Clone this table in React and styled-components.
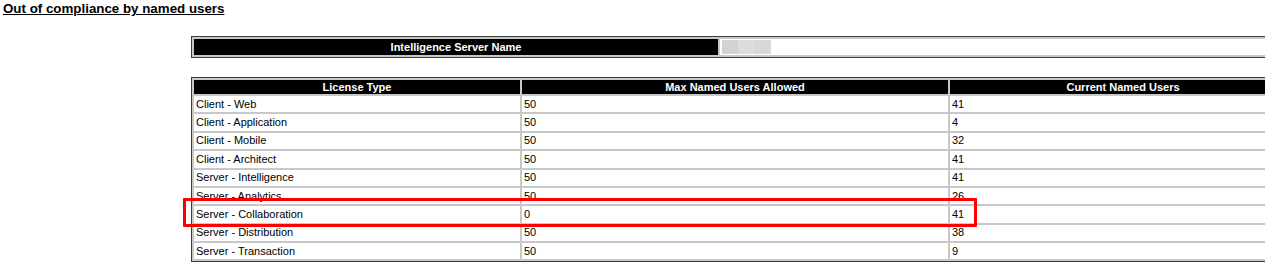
import styled, { createGlobalStyle } from "styled-components";

const GlobalStyle = createGlobalStyle`
  html, body {
    margin: 0;
    padding: 0;
    background: #ffffff;
    overflow: hidden;
  }
  body {
    font-family: "Liberation Sans", Arial, sans-serif;
    color: #000000;
  }
`;

const Page = styled.div`
  padding: 1px 0 0 3px;
`;

const Title = styled.div`
  font-size: 13.33px;
  line-height: 16px;
  font-weight: bold;
  text-decoration: underline;
`;

const Frame = styled.div`
  position: relative;
  margin-left: 188px;
  margin-top: ${(props) => props.$top}px;
  width: 1106px;
  border: 1px solid #3c3c3c;
`;

const Table = styled.table`
  width: 100%;
  table-layout: fixed;
  border-collapse: separate;
  border-spacing: 0;
  border-top: 2px solid #c8c8c8;
  border-left: 2px solid #c8c8c8;
`;

const HeadCell = styled.th`
  box-sizing: border-box;
  background: #000000;
  color: #ffffff;
  font-size: 11px;
  font-weight: bold;
  text-align: center;
  padding: 0 2px;
  height: ${(props) => props.$h || 14}px;
  line-height: 12px;
  border-right: 2px solid #c8c8c8;
  border-bottom: 2px solid #c8c8c8;
`;

const Cell = styled.td`
  box-sizing: content-box;
  font-size: 11px;
  padding: 0 2px;
  height: 16.375px;
  line-height: 13px;
  vertical-align: middle;
  border-right: 2px solid #c8c8c8;
  border-bottom: 2px solid #c8c8c8;
  white-space: nowrap;
`;

const ValueCell = styled.td`
  padding: 0 2px;
  vertical-align: top;
  border-right: 2px solid #c8c8c8;
  border-bottom: 2px solid #c8c8c8;
`;

// redacted server name
const Redacted = styled.span`
  display: block;
  width: 49px;
  height: 14px;
  margin-top: 1px;
  background: linear-gradient(
    to right,
    #d3d3d3 0 16px,
    #dddddd 16px 32px,
    #d8d8d8 32px 49px
  );
`;

const Highlight = styled.div`
  position: absolute;
  left: -9px;
  top: 120px;
  width: 788px;
  height: 23px;
  border: 3px solid #ff0000;
  border-radius: 1px;
  pointer-events: none;
`;

const rows = [
  ["Client - Web", 50, 41],
  ["Client - Application", 50, 4],
  ["Client - Mobile", 50, 32],
  ["Client - Architect", 50, 41],
  ["Server - Intelligence", 50, 41],
  ["Server - Analytics", 50, 26],
  ["Server - Collaboration", 0, 41],
  ["Server - Distribution", 50, 38],
  ["Server - Transaction", 50, 9],
];

function App() {
  return (
    <Page>
      <GlobalStyle />
      <Title>Out of compliance by named users</Title>
      <Frame $top={19}>
        <Table>
          <colgroup>
            <col style={{ width: 526 }} />
            <col />
          </colgroup>
          <tbody>
            <tr>
              <HeadCell $h={18}>Intelligence Server Name</HeadCell>
              <ValueCell>
                <Redacted />
              </ValueCell>
            </tr>
          </tbody>
        </Table>
      </Frame>
      <Frame $top={19}>
        <Table>
          <colgroup>
            <col style={{ width: 328 }} />
            <col style={{ width: 428 }} />
            <col />
          </colgroup>
          <thead>
            <tr>
              <HeadCell $h={16}>License Type</HeadCell>
              <HeadCell $h={16}>Max Named Users Allowed</HeadCell>
              <HeadCell $h={16}>Current Named Users</HeadCell>
            </tr>
          </thead>
          <tbody>
            {rows.map(([name, max, current]) => (
              <tr key={name}>
                <Cell>{name}</Cell>
                <Cell>{max}</Cell>
                <Cell>{current}</Cell>
              </tr>
            ))}
          </tbody>
        </Table>
        <Highlight />
      </Frame>
    </Page>
  );
}

export default App;
